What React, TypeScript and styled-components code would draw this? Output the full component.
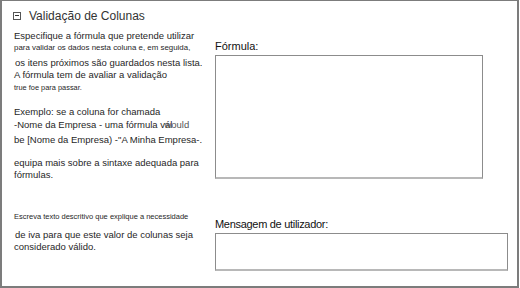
import React from 'react'
import styled, { createGlobalStyle } from 'styled-components'

const GlobalStyle = createGlobalStyle`
  html, body {
    margin: 0;
    padding: 0;
    background: #ffffff;
  }
  body {
    font-family: "Liberation Sans", Arial, sans-serif;
    color: #222222;
  }
`

const Panel = styled.section`
  box-sizing: border-box;
  width: 519px;
  height: 288px;
  border: 2px solid #7c7c7c;
  border-top-width: 1px;
  display: grid;
  grid-template-columns: 200px 1fr;
  background: #ffffff;
`

const LeftColumn = styled.div`
  display: flex;
  flex-direction: column;
  padding-left: 10px;
`

const Header = styled.div`
  height: 29px;
  padding-left: 1px;
  display: flex;
  align-items: center;
  gap: 8px;
`

const CollapseIcon = styled.span`
  box-sizing: border-box;
  width: 8px;
  height: 8px;
  border: 1px solid #555555;
  display: flex;
  align-items: center;
  justify-content: center;
  &::after {
    content: '';
    width: 4px;
    height: 1px;
    background: #333333;
  }
`

const Title = styled.h2`
  margin: 0;
  font-size: 12px;
  font-weight: normal;
  color: #333333;
`

const Line = styled.div<{ $size?: number; $top?: number; $indent?: number }>`
  height: 12px;
  line-height: 12px;
  white-space: nowrap;
  font-size: ${({ $size }) => $size ?? 9.5}px;
  margin-top: ${({ $top }) => $top ?? 0}px;
  padding-left: ${({ $indent }) => $indent ?? 0}px;
  color: #1f1f1f;
`

const Overlap = styled.span`
  margin-left: -8px;
  color: #555555;
`

const RightColumn = styled.div`
  display: flex;
  flex-direction: column;
  padding-left: 13px;
  padding-top: 38px;
`

const Label = styled.label<{ $top?: number }>`
  font-size: 11px;
  line-height: 14px;
  color: #111111;
  white-space: nowrap;
  margin-top: ${({ $top }) => $top ?? 0}px;
`

const TightLabel = styled(Label)`
  letter-spacing: -0.3px;
`

const Field = styled.div<{ $w: number; $h: number }>`
  box-sizing: border-box;
  width: ${({ $w }) => $w}px;
  height: ${({ $h }) => $h}px;
  margin-top: 2px;
  border: 1px solid #8c8c8c;
  border-bottom: 2px solid #b8b8b8;
  background: #ffffff;
`

export default function App() {
  return (
    <>
      <GlobalStyle />
      <Panel>
        <LeftColumn>
          <Header>
            <CollapseIcon />
            <Title>Validação de Colunas</Title>
          </Header>
          <Line $indent={2}>Especifique a fórmula que pretende utilizar</Line>
          <Line $size={7.9} $top={0} $indent={2}>
            para validar os dados nesta coluna e, em seguida,
          </Line>
          <Line $top={3} $indent={3}>os itens próximos são guardados nesta lista.</Line>
          <Line $top={0} $indent={2}>A fórmula tem de avaliar a validação</Line>
          <Line $size={7.4} $top={1} $indent={2}>true foe para passar.</Line>

          <Line $top={12} $indent={2}>Exemplo: se a coluna for chamada</Line>
          <Line $top={1} $indent={2}>
            -Nome da Empresa - uma fórmula vál<Overlap>would</Overlap>
          </Line>
          <Line $top={3} $indent={2}>be [Nome da Empresa) -"A Minha Empresa-.</Line>

          <Line $top={11} $indent={2}>equipa mais sobre a sintaxe adequada para</Line>
          <Line $top={0} $indent={2}>fórmulas.</Line>

          <Line $size={7.5} $top={30} $indent={2}>
            Escreva texto descritivo que explique a necessidade
          </Line>
          <Line $top={6} $indent={3}>de iva para que este valor de colunas seja</Line>
          <Line $top={0} $indent={2}>considerado válido.</Line>
        </LeftColumn>
        <RightColumn>
          <Label>Fórmula:</Label>
          <Field $w={268} $h={124} />
          <TightLabel $top={38}>Mensagem de utilizador:</TightLabel>
          <Field $w={293} $h={38} />
        </RightColumn>
      </Panel>
    </>
  )
}
